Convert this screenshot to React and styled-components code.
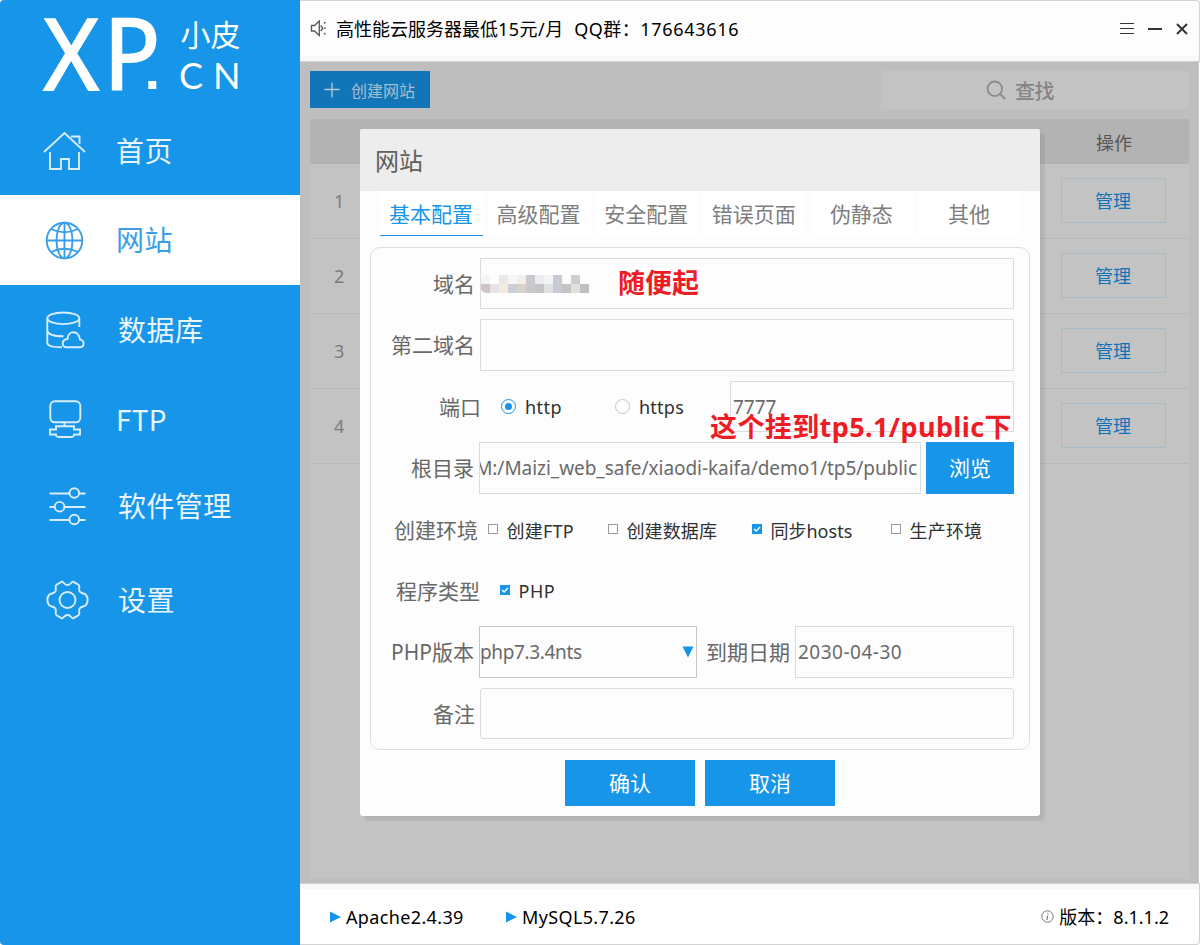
import React, { useState } from "react";

import styled, { createGlobalStyle } from "styled-components";

const GlobalStyle = createGlobalStyle`
  * {
    box-sizing: border-box;
  }
  body {
    margin: 0;
    background: #fff;
    font-family: "Noto Sans", "Noto Sans CJK SC", sans-serif;
  }
  button, input {
    font-family: inherit;
    margin: 0;
  }
`;

const Window = styled.div`
  width: 1200px;
  height: 945px;
  display: flex;
  overflow: hidden;
  white-space: nowrap;
`;

/* ---------- sidebar ---------- */

const Sidebar = styled.nav`
  width: 300px;
  background: #1695e9;
  border-radius: 4px 0 0 4px;
`;

const Logo = styled.svg`
  display: block;
  width: 300px;
  height: 105px;
  overflow: visible;
  fill: #fff;
`;

const NavItem = styled.a`
  height: 90px;
  display: flex;
  align-items: center;
  padding-left: 40px;
  color: ${(p) => (p.$active ? "#3a9fe8" : "#e9f4fd")};
  background: ${(p) => (p.$active ? "#fff" : "transparent")};

  svg {
    width: 50px;
    height: 50px;
    margin-right: ${(p) => p.$gap || 26}px;
    fill: none;
    stroke: ${(p) => (p.$active ? "#3a9fe8" : "#d9edfc")};
    stroke-width: 1.9;
  }
`;

const NavText = styled.span`
  padding-bottom: ${(p) => 2 + (p.$lift || 0)}px;
  font-family: "Noto Sans CJK SC", sans-serif;
  font-size: 28px;
  letter-spacing: ${(p) => p.$spacing || 0}px;
`;

/* ---------- top and bottom bars ---------- */

const Main = styled.div`
  position: relative;
  width: 900px;
  display: flex;
  flex-direction: column;
`;

const TopBar = styled.header`
  height: 62px;
  display: flex;
  align-items: center;
  padding: 0 10px 5px 10px;
  background: #fdfdfd;
  border: 1px solid #d2d2d2;
  border-left: none;
  border-top-right-radius: 4px;
  box-shadow: inset 0 -5px 0 #f8f8f8;
`;

const Notice = styled.span`
  flex: 1;
  margin-left: 9px;
  padding-bottom: 1px;
  font-size: 18px;
  color: #000;
`;

const Spaced = styled.span`
  letter-spacing: ${(p) => p.$by}px;
`;

const WindowButtons = styled.div`
  display: flex;
  align-items: center;
  gap: 14px;
  margin-right: 1px;
  padding-top: 1px;

  svg {
    display: block;
    stroke: #333;
    fill: none;
  }
`;

const BottomBar = styled.footer`
  height: 62px;
  display: flex;
  align-items: center;
  padding: 5px 30px 0 30px;
  background: #fff;
  border: 1px solid #d2d2d2;
  border-left: none;
  border-bottom-right-radius: 4px;
  box-shadow: inset 0 5px 0 #f8f8f8;
  font-size: 18px;
  color: #000;
`;

const Service = styled.div`
  display: flex;
  align-items: center;
  width: 176px;
  letter-spacing: 0.36px;

  svg {
    margin-right: 5px;
    fill: #1695e9;
  }
`;

const Version = styled.div`
  display: flex;
  align-items: center;
  gap: 5px;
  margin-left: auto;
  padding-bottom: 1px;
`;

/* ---------- dimmed page under the dialog ---------- */

const Page = styled.main`
  flex: 1;
  display: flex;
  flex-direction: column;
  gap: 10px;
  padding: 9px 9px 4px 10px;
  margin-right: 1px;
  background: #bebebe;
  border-right: 1px solid #c9c9c9;
`;

const Toolbar = styled.div`
  height: 38px;
  display: flex;
  justify-content: space-between;
`;

const CreateButton = styled.button`
  width: 120px;
  height: 37px;
  display: flex;
  align-items: center;
  gap: 11px;
  padding: 1px 0 0 14px;
  border: none;
  background: #1175b7;
  color: #a5bfd0;
  font-family: "Noto Sans CJK SC", sans-serif;
  font-size: 16px;
  white-space: nowrap;
`;

const SearchBox = styled.div`
  width: 308px;
  display: flex;
  align-items: center;
  gap: 9px;
  padding-left: 105px;
  background: #c3c3c3;
  color: #858585;
  font-size: 20px;
  font-weight: 500;
  letter-spacing: -0.5px;
`;

const Table = styled.div`
  flex: 1;
  background: #c3c3c3;
`;

const TableHead = styled.div`
  height: 45px;
  display: flex;
  align-items: center;
  justify-content: flex-end;
  padding: 0 57px 0 0;
  background: #b3b3b3;
  color: #555;
  font-size: 18px;
`;

const TableRow = styled.div`
  height: 75px;
  display: flex;
  align-items: center;
  justify-content: space-between;
  padding: 0 23px 1px 24px;
  border-bottom: 1px solid #b8b8b8;
  color: #7b7b7b;
  font-size: 18px;
`;

const ManageButton = styled.button`
  width: 105px;
  height: 45px;
  padding: 0 1px 2px 0;
  border: 1px solid #a9bac7;
  background: transparent;
  color: #0f73b8;
  font-size: 18px;
`;

/* ---------- dialog ---------- */

const Dialog = styled.section`
  position: absolute;
  left: 60px;
  top: 129px;
  width: 680px;
  height: 687px;
  background: #fdfdfd;
  border-radius: 3px;
  box-shadow: 5px 5px 0 rgba(0, 0, 0, 0.05), 2px 2px 4px rgba(0, 0, 0, 0.05);
`;

const DialogTitle = styled.h1`
  height: 62px;
  margin: 0;
  padding: 3px 0 0 15px;
  line-height: 58px;
  background: #ededed;
  border-radius: 3px 3px 0 0;
  font-size: 24px;
  font-weight: 400;
  color: #606060;
`;

const Tabs = styled.div`
  height: 45px;
  display: flex;
  gap: 4.6px;
  padding-left: 20px;
`;

const Tab = styled.button`
  width: 103px;
  height: 45px;
  padding: 0 1px 1px 0;
  border: none;
  border-bottom: 1px solid ${(p) => (p.$active ? "#1695e9" : "#fff")};
  background: #fff;
  color: ${(p) => (p.$active ? "#1695e9" : "#7e7e7e")};
  font-size: 21px;
  white-space: nowrap;
`;

const Fieldset = styled.div`
  height: 503px;
  margin: 11px 10px 0;
  padding: 10px 15px 0 0;
  border: 1px solid #ddd;
  border-radius: 10px;
  display: flex;
  flex-direction: column;
  gap: 10px;
`;

const Field = styled.div`
  height: ${(p) => (p.$tall ? 52 : 51)}px;
  display: flex;
  align-items: center;
`;

const Label = styled.label`
  width: ${(p) => p.$width || 109}px;
  padding-right: ${(p) => (p.$gap === undefined ? 5 : p.$gap)}px;
  padding-bottom: 2px;
  text-align: right;
  font-size: 21px;
  color: #686868;
`;

const Input = styled.input`
  flex: 1;
  min-width: 0;
  height: 100%;
  padding: 0 2px;
  border: 1px solid #dcdcdc;
  border-radius: ${(p) => p.$radius || 0}px;
  outline: none;
  background: #fdfdfd;
  color: #6a6a6a;
  font-size: 19px;
  letter-spacing: ${(p) => p.$spacing || 0}px;
`;

const PathBox = styled.div`
  width: 442px;
  height: 100%;
  display: flex;
  align-items: center;
  justify-content: flex-end;
  overflow: hidden;
  padding-right: 3px;
  border: 1px solid #dcdcdc;
  color: #6a6a6a;
  font-size: 19px;
  letter-spacing: -0.05px;
`;

const DomainBox = styled.div`
  flex: 1;
  height: 100%;
  display: flex;
  align-items: center;
  border: 1px solid #dcdcdc;
`;

const Mosaic = styled.div`
  display: grid;
  grid-template-columns: repeat(12, 9px);
  grid-auto-rows: 9px;
  border-radius: 5px 0 0 5px;
  overflow: hidden;
`;

const Tile = styled.span`
  background: ${(p) => p.$color};
`;

const Option = styled.label`
  width: ${(p) => p.$width}px;
  display: flex;
  align-items: center;
  gap: ${(p) => p.$gap || 8}px;
  font-size: 18px;
  letter-spacing: ${(p) => p.$spacing || 0}px;
  color: #303030;
`;

const Radio = styled.span`
  width: 15px;
  height: 15px;
  padding: 3px;
  border: 1px solid ${(p) => (p.$checked ? "#1695e9" : "#c4c4c4")};
  border-radius: 50%;
  background: ${(p) => (p.$checked ? "#1695e9" : "#fff")};
  background-clip: content-box;
`;

const CheckMark = styled.svg`
  width: 10px;
  height: 10px;
  margin-bottom: 1px;
  border: ${(p) => (p.$checked ? "none" : "1px solid #9d9d9d")};
  background: ${(p) => (p.$checked ? "#1695e9" : "#fff")};
  fill: none;
  stroke: #fff;
  stroke-width: 1.4;
`;

const Select = styled.div`
  width: 218px;
  height: 100%;
  display: flex;
  align-items: center;
  justify-content: space-between;
  padding: 0 2px 0 0;
  border: 1px solid #c6c6c6;
  color: #6a6a6a;
  font-size: 19px;
  letter-spacing: -0.36px;

  svg {
    fill: #1695e9;
  }
`;

const PrimaryButton = styled.button`
  width: ${(p) => p.$width}px;
  height: ${(p) => p.$height}px;
  margin-left: ${(p) => p.$left || 0}px;
  padding: 0 0 2px;
  border: none;
  background: #1695e9;
  color: #fff;
  font-size: 21px;
`;

const Actions = styled.div`
  display: flex;
  justify-content: center;
  gap: 10px;
  padding-top: 10px;
`;

// Red remarks floating above the form
const Remark = styled.strong`
  position: absolute;
  left: ${(p) => p.$x}px;
  top: ${(p) => p.$y}px;
  font-size: 27px;
  font-weight: 700;
  line-height: 36px;
  letter-spacing: ${(p) => p.$spacing || 0}px;
  color: #ee1c25;
`;

const HomeIcon = () => (
  <svg viewBox="0 0 50 50">
    <path d="M4 27 L24.5 8 L45 27" />
    <path d="M10 27 V44 H21 V34 H29 V44 H39 V27" />
    <path d="M31 11.5 H39.5 V19" />
  </svg>
);

const GlobeIcon = () => (
  <svg viewBox="0 0 50 50">
    <circle cx="24.5" cy="25.5" r="17.8" />
    <ellipse cx="24.5" cy="25.5" rx="8" ry="17.8" />
    <path d="M24.5 7.7 V43.3 M6.7 25.5 H42.3" />
    <path d="M11 14 Q24.5 20.5 38 14 M11 37 Q24.5 30.5 38 37" />
  </svg>
);

const DatabaseIcon = () => (
  <svg viewBox="0 0 50 50">
    <ellipse cx="23.3" cy="13.3" rx="16" ry="5.8" />
    <path d="M7.3 13.5 V38 C7.5 41 14 42.3 22 42.3 M39.3 13.5 V22" />
    <path d="M7.3 26 C8 29 14 31.3 23.5 31.3" />
    <path d="M27 42.3 H40 C44.8 42.3 44.8 35 40 34.6 C39 25 28 24.8 27.5 34 C21.5 34.5 21 42.3 27 42.3 Z" />
  </svg>
);

const FtpIcon = () => (
  <svg viewBox="0 0 50 50">
    <rect x="10.3" y="6.3" width="30" height="21" rx="4.5" />
    <path d="M24.5 27.5 V31 M16 31.3 H34 V34.5 H40 V39.5 H34 C34 42 33 42 31 42 H19 C17 42 16 42 16 39.5 H10 V34.5 H16 Z" />
  </svg>
);

const SlidersIcon = () => (
  <svg viewBox="0 0 50 50">
    <path d="M9.5 8.5 H29.5 M39 8.5 H45.5 M9.5 22 H15 M24.5 22 H45.5 M9.5 35 H29.5 M39 35 H45.5" />
    <circle cx="34.3" cy="8" r="4.8" />
    <circle cx="19.6" cy="21.7" r="4.8" />
    <circle cx="34.3" cy="34.5" r="4.8" />
  </svg>
);

const GearIcon = () => (
  <svg viewBox="0 0 50 50">
    <circle cx="27.5" cy="25" r="8" />
    <path d="M22 6.6 C24 6.8 24 10 27.5 10 C31 10 31 6.8 33 6.6 L38.5 9.8 C40.5 11.5 38.3 14 39.5 16.3 C41 19 45 18 46 20 C48.2 22.5 48.2 27.5 46 30 C44.5 32 41 31 39.5 33.7 C38.3 36 40.5 38.5 38.5 40.2 L33 43.4 C31 43.2 31 40 27.5 40 C24 40 24 43.2 22 43.4 L16.5 40.2 C14.5 38.5 16.7 36 15.5 33.7 C14 31 10.5 32 9 30 C6.8 27.5 6.8 22.5 9 20 C10.5 18 14 19 15.5 16.3 C16.7 14 14.5 11.5 16.5 9.8 Z" />
  </svg>
);

const NAV = [
  { name: "首页", Icon: HomeIcon, lift: -1.5, spacing: 0.5 },
  { name: "网站", Icon: GlobeIcon, spacing: 0.5 },
  { name: "数据库", Icon: DatabaseIcon, gap: 28, spacing: 0.5 },
  { name: "FTP", Icon: FtpIcon, gap: 26, spacing: 0.3 },
  { name: "软件管理", Icon: SlidersIcon, gap: 28, lift: 8, spacing: 0.4 },
  { name: "设置", Icon: GearIcon, gap: 28, spacing: 0.5 },
];

const TABS = ["基本配置", "高级配置", "安全配置", "错误页面", "伪静态", "其他"];

const TILES = [
  "#f5f5f5", "#fdfdfd", "#e9e9e9", "#f7f7f7", "#f3f0ec", "#c9c9cd",
  "#e8eef2", "#f4f4f4", "#c8cad4", "#fdfdfd", "#cdcdd3", "#fdfdfd",
  "#d0c5c5", "#e5e5e5", "#f3ebe1", "#cccfd6", "#d9d2cb", "#c9c9cb",
  "#c5c5c5", "#e0e2e2", "#c7c9d4", "#c3c3c3", "#e3dfdb", "#c0c0c0",
];

const CheckOption = ({ checked, width, spacing, children }) => (
  <Option $width={width} $gap={8.5} $spacing={spacing}>
    <CheckMark viewBox="0 0 10 10" $checked={checked}>
      {checked && <path d="M2 5 L4.2 7 L8 3" />}
    </CheckMark>
    {children}
  </Option>
);

const SiteDialog = () => {
  const [tab, setTab] = useState(0);
  const [port, setPort] = useState("7777");
  const [expires, setExpires] = useState("2030-04-30");

  return (
    <Dialog>
      <DialogTitle>网站</DialogTitle>
      <Tabs>
        {TABS.map((name, i) => (
          <Tab key={name} $active={i === tab} onClick={() => setTab(i)}>
            {name}
          </Tab>
        ))}
      </Tabs>
      <Fieldset>
        <Field>
          <Label>域名</Label>
          <DomainBox>
            <Mosaic>
              {TILES.map((color, i) => (
                <Tile key={i} $color={color} />
              ))}
            </Mosaic>
          </DomainBox>
        </Field>
        <Field $tall>
          <Label>第二域名</Label>
          <Input />
        </Field>
        <Field>
          <Label $width={130} $gap={20}>
            端口
          </Label>
          <Option $width={114} $gap={9} $spacing={0.5}>
            <Radio $checked />
            http
          </Option>
          <Option $width={115} $gap={9} $spacing={0.25}>
            <Radio />
            https
          </Option>
          <Input value={port} onChange={(e) => setPort(e.target.value)} />
        </Field>
        <Field $tall>
          <Label $width={108} $gap={5}>
            根目录
          </Label>
          <PathBox>M:/Maizi_web_safe/xiaodi-kaifa/demo1/tp5/public</PathBox>
          <PrimaryButton $width={88} $height={52} $left={5}>
            浏览
          </PrimaryButton>
        </Field>
        <Field>
          <Label $width={117} $gap={10}>
            创建环境
          </Label>
          <CheckOption width={120} spacing={0.2}>
            创建FTP
          </CheckOption>
          <CheckOption width={144} spacing={0.1}>
            创建数据库
          </CheckOption>
          <CheckOption width={139} checked>
            同步hosts
          </CheckOption>
          <CheckOption width={100} spacing={0.2}>
            生产环境
          </CheckOption>
        </Field>
        <Field>
          <Label $width={129} $gap={20}>
            程序类型
          </Label>
          <CheckOption width={100} spacing={0.5} checked>
            PHP
          </CheckOption>
        </Field>
        <Field $tall>
          <Label $width={108}>PHP版本</Label>
          <Select>
            php7.3.4nts
            <svg width="12" height="12" viewBox="0 0 12 12">
              <path d="M0.5 0.5 H11.5 L6 11.5 Z" />
            </svg>
          </Select>
          <Label $width={98}>到期日期</Label>
          <Input
            $spacing={0.5}
            value={expires}
            onChange={(e) => setExpires(e.target.value)}
          />
        </Field>
        <Field>
          <Label>备注</Label>
          <Input $radius={3} />
        </Field>
      </Fieldset>
      <Actions>
        <PrimaryButton $width={130} $height={46}>
          确认
        </PrimaryButton>
        <PrimaryButton $width={130} $height={46}>
          取消
        </PrimaryButton>
      </Actions>
      <Remark $x={258} $y={136}>
        随便起
      </Remark>
      <Remark $x={350} $y={280} $spacing={0.4}>
        这个挂到tp5.1/public下
      </Remark>
    </Dialog>
  );
};

const App = () => {
  return (
    <>
      <GlobalStyle />
      <Window>
        <Sidebar>
          <Logo viewBox="0 0 300 105" fontFamily="Noto Sans">
            <text x="42" y="90.5" fontSize="101" fontWeight="500" textLength="58.5" lengthAdjust="spacingAndGlyphs">
              X
            </text>
            <text x="103" y="90.5" fontSize="101" fontWeight="500" textLength="58" lengthAdjust="spacingAndGlyphs">
              P
            </text>
            <rect x="148.3" y="81" width="8" height="8" />
            <text x="180.5" y="45.5" fontSize="30" fontFamily="Noto Sans CJK SC">
              小皮
            </text>
            <text x="179" y="89" fontSize="36" fontFamily="Lato" letterSpacing="10">
              CN
            </text>
          </Logo>
          {NAV.map(({ name, Icon, gap, lift, spacing }, i) => (
            <NavItem key={name} $active={i === 1} $gap={gap}>
              <Icon />
              <NavText $lift={lift} $spacing={spacing}>
                {name}
              </NavText>
            </NavItem>
          ))}
        </Sidebar>
        <Main>
          <TopBar>
            <svg width="17" height="17" viewBox="0 0 17 17" fill="none" stroke="#555" strokeWidth="1.3">
              <path d="M1.5 5.5 H4.5 L9.3 1 V15.5 L4.5 11 H1.5 Z" />
              <path d="M10.8 5.5 L12.8 8.2 L10.8 11" />
              <path d="M14 3.5 L15.5 2 M14 8.2 H15.8 M14 13 L15.5 14.5" />
            </svg>
            <Notice>
              高性能云服务器最低
              <Spaced $by={0.5}>15元/月&nbsp; QQ群：</Spaced>
              <Spaced $by={0.7}>176643616</Spaced>
            </Notice>
            <WindowButtons>
              <svg width="14" height="12" viewBox="0 0 14 12">
                <path d="M0 0.5 H14 M0 5.5 H14 M0 10.5 H14" />
              </svg>
              <svg width="14" height="12" viewBox="0 0 14 12" strokeWidth="2">
                <path d="M0 6 H14" />
              </svg>
              <svg width="12" height="12" viewBox="0 0 12 12" strokeWidth="2">
                <path d="M1 1 L11 11 M11 1 L1 11" />
              </svg>
            </WindowButtons>
          </TopBar>
          <Page>
            <Toolbar>
              <CreateButton>
                <svg width="16" height="16" viewBox="0 0 16 16" stroke="#b5cbd9" strokeWidth="1.3">
                  <path d="M8 0.5 V15.5 M0.5 7.5 H15.5" />
                </svg>
                创建网站
              </CreateButton>
              <SearchBox>
                <svg width="20" height="20" viewBox="0 0 20 20" fill="none" stroke="#8c8c8c" strokeWidth="1.8">
                  <circle cx="8.8" cy="8.8" r="7.3" />
                  <path d="M14 14 L19.2 19" />
                </svg>
                查找
              </SearchBox>
            </Toolbar>
            <Table>
              <TableHead>操作</TableHead>
              {[1, 2, 3, 4].map((id) => (
                <TableRow key={id}>
                  {id}
                  <ManageButton>管理</ManageButton>
                </TableRow>
              ))}
            </Table>
          </Page>
          <BottomBar>
            <Service>
              <svg width="11" height="12" viewBox="0 0 11 12">
                <path d="M0 0.5 L11 6 L0 11.5 Z" />
              </svg>
              Apache2.4.39
            </Service>
            <Service>
              <svg width="11" height="12" viewBox="0 0 11 12">
                <path d="M0 0.5 L11 6 L0 11.5 Z" />
              </svg>
              MySQL5.7.26
            </Service>
            <Version>
              <svg width="13" height="13" viewBox="0 0 13 13" fill="none" stroke="#777">
                <circle cx="6.5" cy="6.5" r="5.7" />
                <path d="M7 3 L6.8 4.2 M6.6 5.5 L6 10" strokeWidth="1.2" />
              </svg>
              版本：8.1.1.2
            </Version>
          </BottomBar>
          <SiteDialog />
        </Main>
      </Window>
    </>
  );
};

export default App;
